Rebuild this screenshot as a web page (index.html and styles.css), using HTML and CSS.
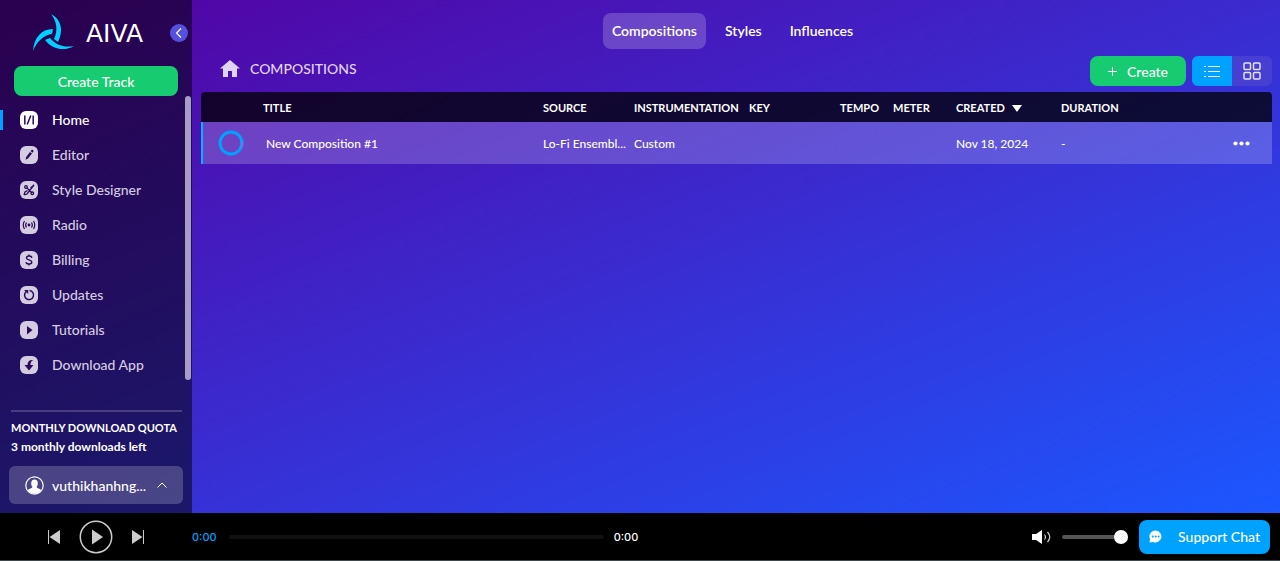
FILE: index.html
```
<!DOCTYPE html>
<html lang="en">
<head>
    <meta charset="UTF-8">
    <meta name="viewport" content="width=device-width, initial-scale=1.0">
    <title>AIVA - Compositions</title>
    <link rel="stylesheet" href="styles.css">
</head>
<body>
    <div class="layout">
        <!-- Sidebar -->
        <aside class="sidebar">
            <div class="brand">
                <svg class="brand-logo" width="42" height="38" viewBox="0 0 42 38" fill="#00d0ff">
                    <path d="M18 0C28 5 31 16 25 28L21 25C25 16 24 8 18 0Z"/>
                    <path d="M0 37C1 24 8 15 20 15L19 20C11 21 4 27 0 37Z"/>
                    <path d="M12 26L17 24C23 31 31 34 41 32C31 38 19 35 12 26Z"/>
                </svg>
                <span class="brand-name">AIVA</span>
                <button class="collapse" aria-label="Collapse sidebar">
                    <svg width="18" height="18" viewBox="0 0 18 18" fill="none" stroke="#fff" stroke-width="1.2"><path d="M11 4.5L6.500 9L11 13.500"/></svg>
                </button>
            </div>
            <button class="create-track">Create Track</button>

            <div class="nav-scroll">
                <nav class="nav">
                    <a href="#" class="nav-item active">
                        <svg width="18" height="18" viewBox="0 0 18 18"><rect width="18" height="18" rx="6" fill="currentColor"/><path d="M4.800 4.500V13.500M13.200 4.500V13.500M10.800 4.500L7.200 13.500" stroke="#2a0a5a" stroke-width="1.5" fill="none"/></svg>
                        Home
                    </a>
                    <a href="#" class="nav-item">
                        <svg width="18" height="18" viewBox="0 0 18 18"><rect width="18" height="18" rx="6" fill="currentColor"/><path d="M5.500 13.800L6.200 11L10 6L12 7.500L8 12.500ZM10.600 5.200L11.600 4C12.600 3.400 13.800 4.400 13.400 5.500L12.600 6.700Z" fill="#2a0a5a"/></svg>
                        Editor
                    </a>
                    <a href="#" class="nav-item">
                        <svg width="18" height="18" viewBox="0 0 18 18"><rect width="18" height="18" rx="6" fill="currentColor"/><g stroke="#2a0a5a" stroke-width="1.300" fill="none"><path d="M4 14L7 13L14 4M4 14L5 11L7.500 9.500M10.500 7L14 4M7 7L11.500 11.500"/><circle cx="6" cy="6" r="1.300"/><circle cx="12.300" cy="12.300" r="1.300"/></g></svg>
                        Style Designer
                    </a>
                    <a href="#" class="nav-item">
                        <svg width="18" height="18" viewBox="0 0 18 18"><rect width="18" height="18" rx="6" fill="currentColor"/><circle cx="9" cy="9" r="1.400" fill="#2a0a5a"/><path d="M6.500 6.500Q4.800 9 6.500 11.500M11.500 6.500Q13.200 9 11.500 11.500M4.500 5Q2 9 4.500 13M13.500 5Q16 9 13.500 13" stroke="#2a0a5a" stroke-width="1.200" fill="none"/></svg>
                        Radio
                    </a>
                    <a href="#" class="nav-item">
                        <svg width="18" height="18" viewBox="0 0 18 18"><rect width="18" height="18" rx="6" fill="currentColor"/><path d="M11.800 6.800C11.500 4.400 6.500 4.400 6.500 6.900C6.500 9.300 11.800 8.500 11.800 11.100C11.800 13.600 6.300 13.600 6.100 11.100M9 3.500V5.200M9 12.800V14.500" stroke="#2a0a5a" stroke-width="1.400" fill="none"/></svg>
                        Billing
                    </a>
                    <a href="#" class="nav-item">
                        <svg width="18" height="18" viewBox="0 0 18 18"><rect width="18" height="18" rx="6" fill="currentColor"/><path d="M6 5.800A4.500 4.500 0 1 0 9.500 4.600" stroke="#2a0a5a" stroke-width="1.500" fill="none"/><path d="M4 4H8.200V8Z" fill="#2a0a5a"/></svg>
                        Updates
                    </a>
                    <a href="#" class="nav-item">
                        <svg width="18" height="18" viewBox="0 0 18 18"><rect width="18" height="18" rx="6" fill="currentColor"/><path d="M7 5L12.500 9L7 13.500Z" fill="#2a0a5a"/></svg>
                        Tutorials
                    </a>
                    <a href="#" class="nav-item">
                        <svg width="18" height="18" viewBox="0 0 18 18"><rect width="18" height="18" rx="6" fill="currentColor"/><path d="M13.500 4C9.500 3.500 7.500 5.500 7.500 9H4.500L9 14.500L13.500 9H10.500C10.300 6.500 11.200 5 13.500 4Z" fill="#2a0a5a"/></svg>
                        Download App
                    </a>
                </nav>
                <div class="scroll-thumb"></div>
            </div>

            <div class="account">
                <div class="quota">
                    <div class="quota-title">MONTHLY DOWNLOAD QUOTA</div>
                    <div class="quota-left">3 monthly downloads left</div>
                </div>
                <button class="user">
                    <svg width="19" height="19" viewBox="0 0 19 19"><circle cx="9.500" cy="9.500" r="8.700" fill="none" stroke="#fff" stroke-width="1.200"/><ellipse cx="9.500" cy="7.600" rx="3.300" ry="4" fill="#fff"/><path d="M2.800 14C4.500 12.500 6.500 12.600 7.500 11H11.500C12.500 12.600 14.500 12.500 16.200 14C13 19 6 19 2.800 14Z" fill="#fff"/></svg>
                    <span class="user-name">vuthikhanhng...</span>
                    <svg width="10" height="6" viewBox="0 0 10 6" fill="none" stroke="#fff"><path d="M0.500 5.500L5 1L9.500 5.500"/></svg>
                </button>
            </div>
        </aside>

        <!-- Main content -->
        <main class="main">
            <nav class="tabs">
                <a href="#" class="tab active">Compositions</a>
                <a href="#" class="tab">Styles</a>
                <a href="#" class="tab">Influences</a>
            </nav>

            <div class="toolbar">
                <div class="breadcrumb">
                    <svg width="20" height="17" viewBox="0 0 20 17" fill="currentColor"><path d="M10 0L20 8.500H17V17H12V11H8V17H3V8.500H0Z"/></svg>
                    <span>COMPOSITIONS</span>
                </div>
                <button class="create">
                    <svg width="9" height="9" viewBox="0 0 9 9" stroke="#fff"><path d="M4.500 0V9M0 4.500H9"/></svg>
                    Create
                </button>
                <div class="view-switch">
                    <button class="view active" aria-label="List view">
                        <svg width="16" height="13" viewBox="0 0 16 13" stroke="#fff" stroke-width="1.200"><path d="M0 1.500H2M4 1.500H16M0 6.500H2M4 6.500H16M0 11.500H2M4 11.500H16"/></svg>
                    </button>
                    <button class="view" aria-label="Grid view">
                        <svg width="18" height="18" viewBox="0 0 18 18" fill="none" stroke="#e4e0fa" stroke-width="1.500"><rect x="1" y="1" width="6.500" height="6.500" rx="1"/><rect x="10.500" y="1" width="6.500" height="6.500" rx="1"/><rect x="1" y="10.500" width="6.500" height="6.500" rx="1"/><rect x="10.500" y="10.500" width="6.500" height="6.500" rx="1"/></svg>
                    </button>
                </div>
            </div>

            <table class="tracks">
                <colgroup>
                    <col class="col-status">
                    <col>
                    <col class="col-source">
                    <col class="col-instr">
                    <col class="col-key">
                    <col class="col-tempo">
                    <col class="col-meter">
                    <col class="col-created">
                    <col class="col-duration">
                    <col class="col-menu">
                </colgroup>
                <thead>
                    <tr>
                        <th></th>
                        <th>TITLE</th>
                        <th>SOURCE</th>
                        <th>INSTRUMENTATION</th>
                        <th>KEY</th>
                        <th>TEMPO</th>
                        <th>METER</th>
                        <th>CREATED <svg class="sort" width="10" height="7" viewBox="0 0 10 7" fill="#fff"><path d="M0 0H10L5 7Z"/></svg></th>
                        <th>DURATION</th>
                        <th></th>
                    </tr>
                </thead>
                <tbody>
                    <tr>
                        <td class="status"><svg width="26" height="26" viewBox="0 0 26 26" fill="none" stroke-width="3"><circle cx="13" cy="13" r="11" stroke="#00a2ff"/><path d="M23.900 11.500A11 11 0 0 1 22.500 18.500" stroke="#4a83ea"/></svg></td>
                        <td class="title">New Composition #1</td>
                        <td>Lo-Fi Ensembl...</td>
                        <td>Custom</td>
                        <td></td>
                        <td></td>
                        <td></td>
                        <td>Nov 18, 2024</td>
                        <td>-</td>
                        <td class="menu">
                            <button class="more" aria-label="More"><svg width="17" height="5" viewBox="0 0 17 5" fill="#fff"><circle cx="2.500" cy="2.500" r="2.100"/><circle cx="8.500" cy="2.500" r="2.100"/><circle cx="14.500" cy="2.500" r="2.100"/></svg></button>
                        </td>
                    </tr>
                </tbody>
            </table>
        </main>
    </div>

    <!-- Player -->
    <footer class="player">
        <div class="controls">
            <button aria-label="Previous"><svg width="12" height="16" viewBox="0 0 12 16" fill="#ccc"><path d="M0 1H1V15H0ZM12 1V15L1.500 8Z"/></svg></button>
            <button aria-label="Play"><svg width="34" height="34" viewBox="0 0 34 34"><circle cx="17" cy="17" r="15.700" fill="none" stroke="#ccc" stroke-width="1.500"/><path d="M13 9.500V24.500L24 17Z" fill="#ccc"/></svg></button>
            <button aria-label="Next"><svg width="12" height="16" viewBox="0 0 12 16" fill="#ccc"><path d="M11 1H12V15H11ZM0 1V15L10.500 8Z"/></svg></button>
        </div>
        <span class="time current">0:00</span>
        <div class="progress"></div>
        <span class="time">0:00</span>
        <div class="volume">
            <svg width="20" height="14" viewBox="0 0 20 14"><path d="M0 4H4L10 0V14L4 10H0Z" fill="#fff"/><path d="M12.500 4.500Q14.500 7 12.500 9.500M15.500 2Q20 7 15.500 12" fill="none" stroke="#ccc" stroke-width="1.200"/></svg>
            <input type="range" class="volume-range" min="0" max="100" value="100" aria-label="Volume">
        </div>
        <button class="support">
            <svg width="13" height="13" viewBox="0 0 13 13"><path d="M6.500 0.500A6 6 0 1 1 4 12L0.500 12.500L1 9A6 6 0 0 1 6.500 0.500Z" fill="#fff"/><g fill="#00a2ff"><circle cx="3.800" cy="6.500" r="1"/><circle cx="6.700" cy="6.500" r="1"/><circle cx="9.600" cy="6.500" r="1"/></g></svg>
            Support Chat
        </button>
    </footer>
</body>
</html>
```
FILE: styles.css
```
* {
    box-sizing: border-box;
}

body {
    margin: 0;
    min-height: 100vh;
    display: flex;
    flex-direction: column;
    font-family: Lato, sans-serif;
    font-size: 14px;
    font-weight: 500;
    color: #fff;
    background: #000;
}

button {
    font: inherit;
    color: inherit;
    border: none;
    background: none;
    padding: 0;
    cursor: pointer;
}

a {
    color: inherit;
    text-decoration: none;
}

svg {
    flex-shrink: 0;
}

.layout {
    flex: 1;
    display: flex;
    background: linear-gradient(to bottom right, #5500a0, #3a2bcf 50%, #1c57ff);
}

/* Sidebar */
.sidebar {
    width: 192px;
    flex-shrink: 0;
    display: flex;
    flex-direction: column;
    background: rgba(0, 0, 0, 0.5);
}

.brand {
    display: flex;
    align-items: center;
    height: 66px;
    padding: 0 4px 0 33px;
}

.brand-name {
    margin-left: 11px;
    font-family: "DejaVu Sans", sans-serif;
    font-size: 25px;
    font-weight: 400;
}

.collapse {
    display: flex;
    margin-left: auto;
    border-radius: 50%;
    background: #5650e0;
}

.create-track {
    height: 30px;
    margin: 0 14px;
    border-radius: 8px;
    background: #17cc70;
}

.nav-scroll {
    display: flex;
    justify-content: space-between;
}

.nav {
    flex: 1;
    padding-top: 6px;
}

.nav-item {
    display: flex;
    align-items: center;
    gap: 14px;
    height: 35px;
    padding-left: 20px;
    color: #d4cce0;
}

.nav-item.active {
    color: #fff;
}

.nav-item.active::before {
    content: "";
    width: 3px;
    height: 20px;
    margin: 0 -17px 0 -20px;
    background: #00a2ff;
}

/* the bar takes 3px, so the icon keeps its column */
.nav-item.active svg {
    margin-left: 20px;
}

.scroll-thumb {
    width: 6px;
    height: 284px;
    margin-right: 1px;
    border-radius: 3px;
    background: #a79cc4;
}

.account {
    margin: auto 9px 9px;
}

.quota {
    margin: 0 1px 11px 2px;
    padding-top: 9px;
    border-top: 2px solid #4b3d82;
}

.quota-title {
    font-size: 11px;
    font-weight: 700;
    line-height: 13px;
}

.quota-left {
    margin-top: 5px;
    font-size: 12px;
    font-weight: 700;
    line-height: 16px;
}

.user {
    display: flex;
    align-items: center;
    width: 100%;
    height: 38px;
    padding: 0 16px;
    border-radius: 6px;
    background: rgba(255, 255, 255, 0.2);
}

.user-name {
    flex: 1;
    padding-left: 8px;
    text-align: left;
}

/* Main content */
.main {
    flex: 1;
    min-width: 0;
    padding: 13px 8px 0 9px;
}

.tabs {
    display: flex;
    justify-content: center;
    gap: 10px;
    padding-right: 8px;
}

.tab {
    padding: 0 9px;
    border-radius: 8px;
    font-weight: 600;
    line-height: 36px;
}

.tab.active {
    background: rgba(255, 255, 255, 0.2);
}

.toolbar {
    display: flex;
    align-items: center;
    padding: 7px 0 6px;
}

.breadcrumb {
    display: flex;
    align-items: center;
    gap: 10px;
    margin: 0 auto 6px 19px;
    color: #e0d4f4;
}

.create {
    display: flex;
    align-items: center;
    gap: 10px;
    height: 30px;
    margin-right: 6px;
    padding: 0 18px;
    border-radius: 8px;
    background: #17cc70;
}

.view-switch {
    display: flex;
    border-radius: 6px;
    overflow: hidden;
    background: #473fd2;
}

.view {
    display: flex;
    align-items: center;
    justify-content: center;
    width: 40px;
    height: 30px;
}

.view.active {
    background: #00a2ff;
}

/* Tracks table */
.tracks {
    width: 100%;
    table-layout: fixed;
    border-collapse: separate;
    border-spacing: 0;
    border-radius: 4px 4px 0 0;
    overflow: hidden;
}

.tracks th,
.tracks td {
    padding: 0;
    text-align: left;
    white-space: nowrap;
}

.tracks th {
    height: 30px;
    font-size: 11px;
    font-weight: 700;
    background: rgba(0, 0, 0, 0.75);
}

.tracks td {
    height: 42px;
    font-size: 12px;
    font-weight: 500;
    background: rgba(255, 255, 255, 0.2);
}

.tracks .status {
    padding-left: 15px;
    border-left: 2px solid #00b4ff;
}

.tracks .title {
    padding-left: 3px;
}

.tracks .menu {
    padding-left: 32px;
}

.status svg,
.more,
.more svg {
    display: block;
}

.sort {
    margin-left: 4px;
}

.col-status { width: 62px; }
.col-source { width: 91px; }
.col-instr { width: 115px; }
.col-key { width: 91px; }
.col-tempo { width: 53px; }
.col-meter { width: 63px; }
.col-created { width: 105px; }
.col-duration { width: 140px; }
.col-menu { width: 71px; }

/* Player */
.player {
    display: flex;
    align-items: center;
    height: 48px;
    padding: 0 10px 0 48px;
    background: #000;
    border-bottom: 1px solid #3c4a4e;
}

.controls {
    display: flex;
    align-items: center;
    gap: 19px;
    width: 144px;
}

.controls button,
.controls svg {
    display: block;
}

.time {
    font-family: Inter, sans-serif;
    font-size: 11px;
    font-weight: 500;
}

.time.current {
    color: #00a2ff;
}

.progress {
    flex: 1;
    max-width: 375px;
    height: 4px;
    margin: 0 10px 0 12px;
    border-radius: 2px;
    background: #111;
}

.volume {
    display: flex;
    align-items: center;
    gap: 10px;
    margin-left: auto;
}

.volume-range {
    appearance: none;
    width: 66px;
    height: 4px;
    margin: 0 11px 0 0;
    border-radius: 2px;
    background: #555;
}

.volume-range::-webkit-slider-thumb {
    appearance: none;
    width: 14px;
    height: 14px;
    border-radius: 50%;
    background: #fff;
}

.support {
    display: flex;
    align-items: center;
    gap: 16px;
    height: 34px;
    padding: 0 10px;
    border-radius: 8px;
    background: #00a2ff;
}
```
